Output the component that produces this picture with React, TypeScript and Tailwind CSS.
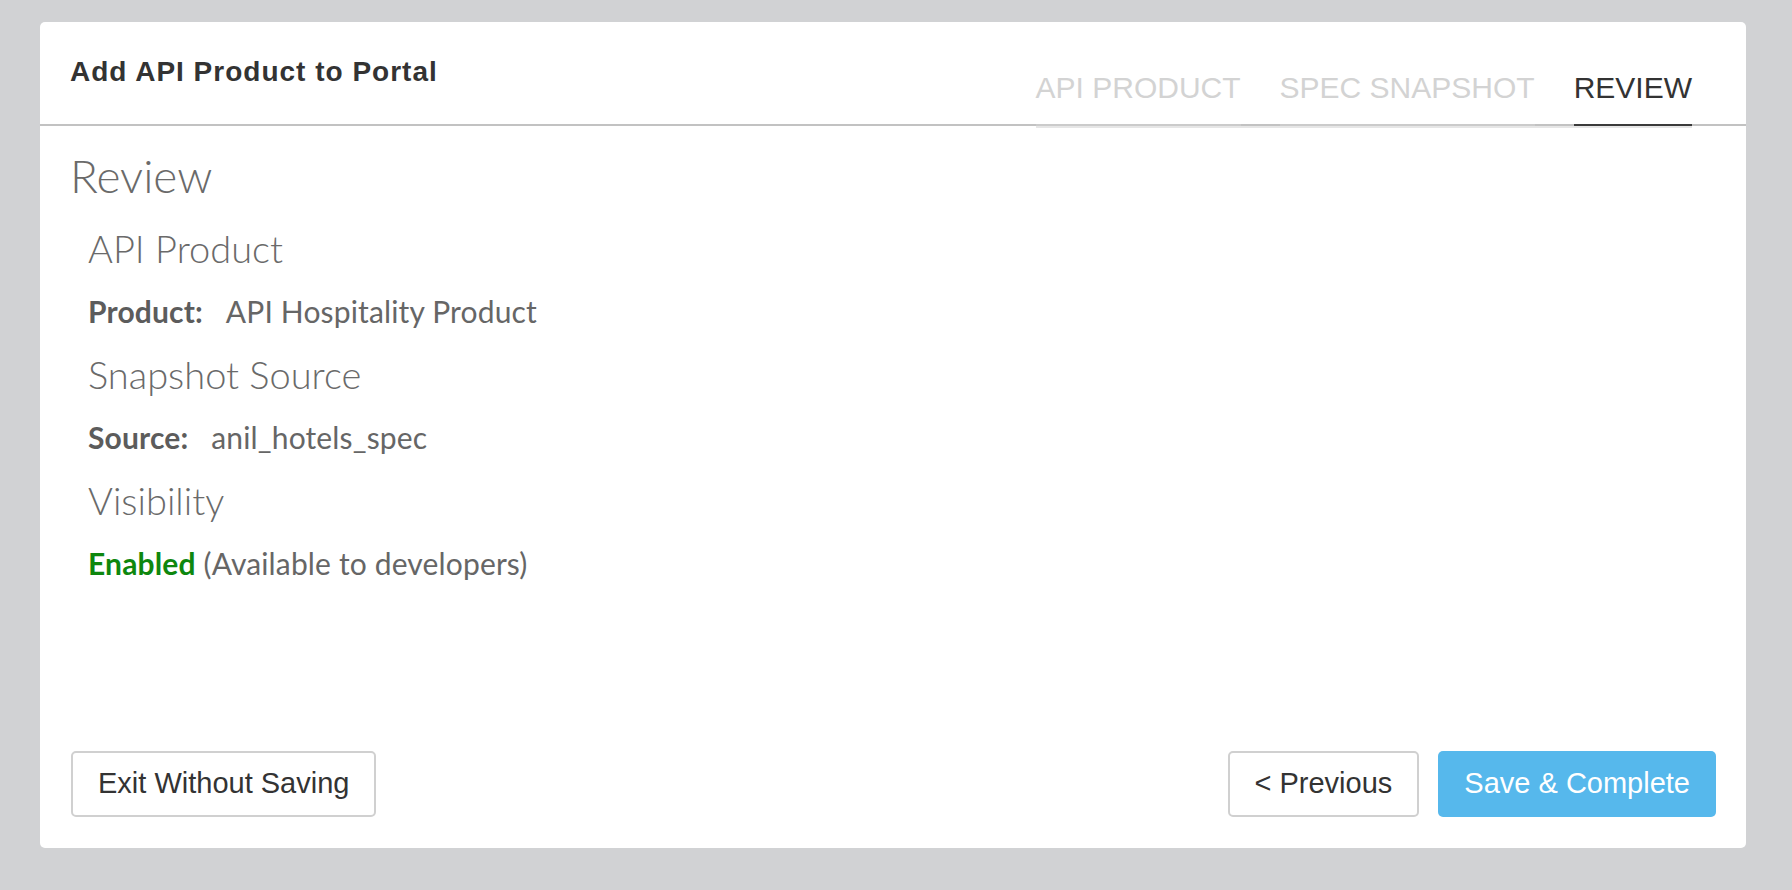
import React from 'react';

const tabs = [
  { label: 'API PRODUCT', active: false },
  { label: 'SPEC SNAPSHOT', active: false },
  { label: 'REVIEW', active: true },
];

const Header = () => (
  <div className="flex justify-between h-[104px] px-[30px] border-b-2 border-[#c2c2c2]">
    <h1 className="pt-[36px] text-[28px] leading-[28px] font-bold tracking-[1px] text-[#333] font-['Liberation_Sans',Arial,sans-serif]">
      Add API Product to Portal
    </h1>
    <nav className="self-end mb-[-4px] mr-[24px] flex gap-[39px] border-b-2 border-[#e6e6e6] font-['Liberation_Sans',Arial,sans-serif]">
      {tabs.map((t) => (
        <div
          key={t.label}
          className={
            t.active
              ? 'pb-[21px] text-[30px] leading-[30px] text-[#333] border-b-2 border-[#3a3a3a]'
              : 'pb-[21px] text-[30px] leading-[30px] text-[#d3d3d3] border-b-2 border-[#cbcbcb]'
          }
        >
          {t.label}
        </div>
      ))}
    </nav>
  </div>
);

const Field = ({ label, value }: { label: string; value: string }) => (
  <p className="pl-[18px] text-[30px] leading-[24px] tracking-[0.15px] text-[#666]">
    <span className="font-bold text-[#5c5c5c] mr-[23px]">{label}</span>
    {value}
  </p>
);

const SubHeading = ({ children }: { children: React.ReactNode }) => (
  <h3 className="pl-[18px] text-[38px] leading-[34px] font-light text-[#6a6a6a]">{children}</h3>
);

const Review = () => (
  <div className="flex-1 flex flex-col gap-[34px] pt-[29px] px-[30px] font-['Lato',sans-serif]">
    <h2 className="text-[46px] leading-[42px] font-light text-[#6a6a6a]">Review</h2>
    <SubHeading>API Product</SubHeading>
    <Field label="Product:" value="API Hospitality Product" />
    <SubHeading>Snapshot Source</SubHeading>
    <Field label="Source:" value="anil_hotels_spec" />
    <SubHeading>Visibility</SubHeading>
    <p className="pl-[18px] text-[30px] leading-[24px] tracking-[0.15px] text-[#666]">
      <span className="font-bold text-[#0e870e]">Enabled</span> (Available to developers)
    </p>
  </div>
);

const Footer = () => (
  <div className="flex justify-between pl-[31px] pr-[30px] pb-[31px] text-[29px] font-['Liberation_Sans',Arial,sans-serif]">
    <button className="h-[66px] px-[25px] rounded-[5px] border-2 border-[#d0d0d0] bg-white text-[#333]">
      Exit Without Saving
    </button>
    <div className="flex gap-[19px]">
      <button className="h-[66px] px-[25px] rounded-[5px] border-2 border-[#d0d0d0] bg-white text-[#333]">
        &lt; Previous
      </button>
      <button className="h-[66px] px-[26px] rounded-[5px] bg-[#56b8ec] text-white">
        Save &amp; Complete
      </button>
    </div>
  </div>
);

export default function App() {
  return (
    <div className="min-h-[890px] bg-[#d1d2d4] pt-[22px] pl-[40px] pr-[46px] pb-[42px]">
      <div className="h-[826px] bg-white rounded-[5px] flex flex-col">
        <Header />
        <Review />
        <Footer />
      </div>
    </div>
  );
}
